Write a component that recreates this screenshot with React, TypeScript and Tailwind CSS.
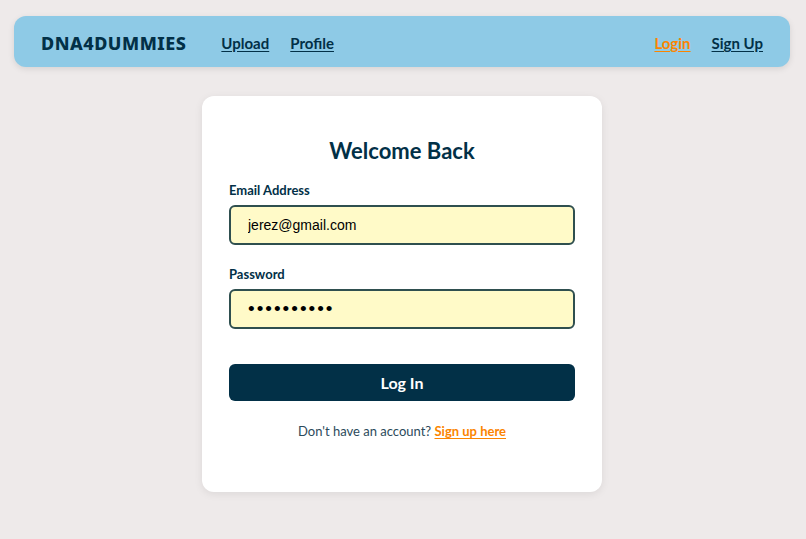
import React, { useState } from 'react';

const font = { fontFamily: 'Lato, "Noto Sans", sans-serif' };

const NavBar: React.FC = () => (
  <nav className="mx-[14px] mt-4 h-[51px] rounded-xl bg-[#8ecae6] shadow-[0_2px_6px_rgba(0,0,0,0.1)] flex items-center px-[27px] pt-[3px]">
    <span
      className="text-[18px] font-extrabold tracking-[0.5px] text-[#023047] mr-[35px]"
      style={{ fontFamily: '"Noto Sans", sans-serif' }}
    >
      DNA4DUMMIES
    </span>
    <div className="flex gap-[21px]">
      <a href="#" className="text-[15px] font-bold text-[#023047] underline underline-offset-2">Upload</a>
      <a href="#" className="text-[15px] font-bold text-[#023047] underline underline-offset-2">Profile</a>
    </div>
    <div className="ml-auto flex gap-[21px]">
      <a href="#" className="text-[15px] font-bold text-[#fb8500] underline underline-offset-2">Login</a>
      <a href="#" className="text-[15px] font-bold text-[#023047] underline underline-offset-2">Sign Up</a>
    </div>
  </nav>
);

export default function App() {
  const [email, setEmail] = useState('jerez@gmail.com');
  const [password, setPassword] = useState('0123456789');

  return (
    <div className="min-h-[539px] bg-[#eeeaea] overflow-hidden pr-[2px]" style={font}>
      <NavBar />

      {/* Login card */}
      <div className="mx-auto mt-[29px] w-[400px] h-[396px] rounded-xl bg-white shadow-[0_2px_8px_rgba(0,0,0,0.08)] px-[27px] pt-[38px]">
        <h2 className="text-center text-[22px] font-bold text-[#023047] leading-[34px]">Welcome Back</h2>

        <label className="block mt-[13px] text-[13px] font-bold text-[#023047] leading-[18px]">Email Address</label>
        <input
          type="email"
          value={email}
          onChange={e => setEmail(e.target.value)}
          className="mt-[6px] block w-full h-[40px] rounded-md border-2 border-[#2f4f4f] bg-[#fffac8] px-[17px] text-[14px] text-black outline-none"
          style={{ fontFamily: '"Liberation Sans", Arial, sans-serif' }}
        />

        <label className="block mt-[20px] text-[13px] font-bold text-[#023047] leading-[18px]">Password</label>
        <input
          type="password"
          value={password}
          onChange={e => setPassword(e.target.value)}
          className="mt-[6px] block w-full h-[40px] rounded-md border-2 border-[#2f4f4f] bg-[#fffac8] px-[17px] text-[19px] tracking-[2px] text-black outline-none"
          style={{ fontFamily: '"Liberation Sans", Arial, sans-serif' }}
        />

        <button className="mt-[35px] w-full h-[37px] rounded-md bg-[#023047] text-white text-[16px] font-bold">
          Log In
        </button>

        <p className="mt-[21px] text-center text-[13px] text-[#2c4a5b]">
          Don't have an account?{' '}
          <a href="#" className="font-bold text-[#fb8500] underline underline-offset-2">Sign up here</a>
        </p>
      </div>
    </div>
  );
}
